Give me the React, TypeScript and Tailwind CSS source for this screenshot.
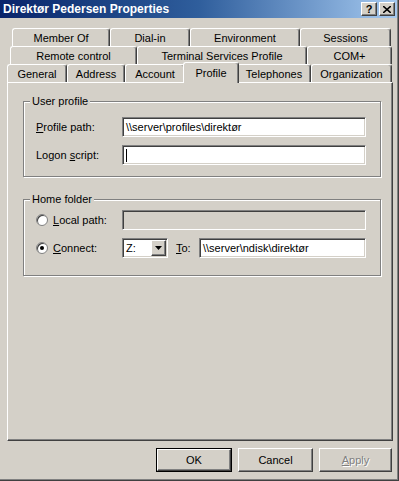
const raised =
  "border-t border-l border-white border-r border-b border-r-[#404040] border-b-[#404040] shadow-[inset_-1px_-1px_0_#808080]";
const sunken =
  "border-t border-l border-[#808080] border-r border-b border-r-white border-b-white shadow-[inset_1px_1px_0_#404040,inset_-1px_-1px_0_#d4d0c8]";

function Tab({ label, w, selected }: { label: string; w: number; selected?: boolean }) {
  if (selected) {
    return (
      <div
        style={{ width: w }}
        className="relative z-10 -mx-[2px] -mt-[2px] -mb-px h-[21px] flex items-center justify-center bg-[#d4d0c8] border-t border-l border-white border-r border-r-[#404040] shadow-[inset_-1px_0_0_#808080] rounded-t-[3px]"
      >
        {label}
      </div>
    );
  }
  return (
    <div
      style={{ width: w }}
      className="h-full flex items-center justify-center border-t border-l border-white border-r border-r-[#404040] shadow-[inset_-1px_0_0_#808080] rounded-t-[3px] pt-px"
    >
      {label}
    </div>
  );
}

function Group({ title, children, h }: { title: string; children: React.ReactNode; h: string }) {
  return (
    <div
      className={`relative ml-[15px] w-[358px] ${h} border border-[#808080] shadow-[1px_1px_0_#fff,inset_1px_1px_0_#fff]`}
    >
      {/* legend sits on the etched line */}
      <div className="absolute -top-[8px] left-[6px] px-[2px] bg-[#d4d0c8] leading-[14px]">{title}</div>
      {children}
    </div>
  );
}

function Radio({ checked }: { checked?: boolean }) {
  return (
    <div className="w-[12px] h-[12px] rounded-full bg-white border border-[#808080] shadow-[inset_1px_1px_0_#404040] flex items-center justify-center">
      {checked && <div className="w-[4px] h-[4px] rounded-full bg-black" />}
    </div>
  );
}

export default function App() {
  return (
    <div className="w-[399px] h-[481px] bg-[#d4d0c8] text-[11px] text-black font-['Liberation_Sans',Arial,sans-serif] shadow-[inset_-1px_-1px_0_#404040,inset_-2px_-2px_0_#808080] overflow-hidden">
      {/* Title bar */}
      <div className="h-[18px] w-[397px] flex items-center justify-between pl-[3px] pr-[2px] bg-gradient-to-r from-[#0a246a] via-[#2f5e9c] to-[#a6caf0]">
        <span className="text-white font-bold text-[12px]">Direktør Pedersen Properties</span>
        <div className="flex gap-[2px]">
          <div className={`w-[16px] h-[14px] bg-[#d4d0c8] ${raised} flex items-center justify-center font-bold text-[11px] leading-none`}>
            ?
          </div>
          <div className={`w-[16px] h-[14px] bg-[#d4d0c8] ${raised} flex items-center justify-center`}>
            <svg width="8" height="7" viewBox="0 0 8 7">
              <path d="M0 0 L8 7 M8 0 L0 7" stroke="black" strokeWidth="1.6" />
            </svg>
          </div>
        </div>
      </div>

      {/* Tabs */}
      <div className="mt-[10px] flex flex-col">
        <div className="flex h-[18px] ml-[12px]">
          <Tab label="Member Of" w={98} />
          <Tab label="Dial-in" w={80} />
          <Tab label="Environment" w={110} />
          <Tab label="Sessions" w={91} />
        </div>
        <div className="flex h-[18px] ml-[10px]">
          <Tab label="Remote control" w={127} />
          <Tab label="Terminal Services Profile" w={170} />
          <Tab label="COM+" w={85} />
        </div>
        <div className="flex h-[18px] ml-[7px]">
          <Tab label="General" w={60} />
          <Tab label="Address" w={58} />
          <Tab label="Account" w={60} />
          <Tab label="Profile" w={56} selected />
          <Tab label="Telephones" w={74} />
          <Tab label="Organization" w={81} />
        </div>
      </div>

      {/* Panel */}
      <div className="ml-[7px] w-[386px] h-[359px] border-t border-l border-white border-r border-b border-r-[#404040] border-b-[#404040] shadow-[inset_-1px_-1px_0_#808080] pt-[18px]">
        <Group title="User profile" h="h-[76px]">
          <div className="flex items-center mt-[15px] ml-[12px]">
            <span className="w-[86px]">
              <u>P</u>rofile path:
            </span>
            <div className={`w-[244px] h-[20px] bg-white ${sunken} flex items-center pl-[3px]`}>
              \\server\profiles\direktør
            </div>
          </div>
          <div className="flex items-center mt-[8px] ml-[12px]">
            <span className="w-[86px]">
              Logon <u>s</u>cript:
            </span>
            <div className={`w-[244px] h-[20px] bg-white ${sunken} flex items-center pl-[3px]`}>
              <div className="w-px h-[13px] bg-black" />
            </div>
          </div>
        </Group>

        <div className="h-[22px]" />

        <Group title="Home folder" h="h-[77px]">
          <div className="flex items-center mt-[10px] ml-[12px]">
            <div className="w-[86px] flex items-center gap-[5px]">
              <Radio />
              <span>
                <u>L</u>ocal path:
              </span>
            </div>
            <div className={`w-[244px] h-[20px] bg-[#d4d0c8] ${sunken}`} />
          </div>
          <div className="flex items-center mt-[8px] ml-[12px]">
            <div className="w-[86px] flex items-center gap-[5px]">
              <Radio checked />
              <span>
                <u>C</u>onnect:
              </span>
            </div>
            <div className={`w-[46px] h-[20px] bg-white ${sunken} flex items-center justify-between pl-[3px] pr-px`}>
              <span>Z:</span>
              <div className={`w-[15px] h-[16px] bg-[#d4d0c8] ${raised} flex items-center justify-center`}>
                <svg width="7" height="4" viewBox="0 0 7 4">
                  <path d="M0 0 H7 L3.5 4 Z" fill="black" />
                </svg>
              </div>
            </div>
            <span className="ml-[8px] w-[23px]">
              <u>T</u>o:
            </span>
            <div className={`w-[167px] h-[20px] bg-white ${sunken} flex items-center pl-[3px]`}>
              \\server\ndisk\direktør
            </div>
          </div>
        </Group>
      </div>

      {/* Buttons */}
      <div className="flex mt-[7px] ml-[156px] gap-[6px]">
        <div className="w-[76px] h-[24px] border border-black">
          <div className={`w-full h-full ${raised} flex items-center justify-center`}>OK</div>
        </div>
        <div className={`w-[75px] h-[24px] ${raised} flex items-center justify-center`}>Cancel</div>
        <div
          className={`w-[73px] h-[24px] ${raised} flex items-center justify-center text-[#808080] [text-shadow:1px_1px_0_#fff]`}
        >
          <span>
            <u>A</u>pply
          </span>
        </div>
      </div>
    </div>
  );
}
